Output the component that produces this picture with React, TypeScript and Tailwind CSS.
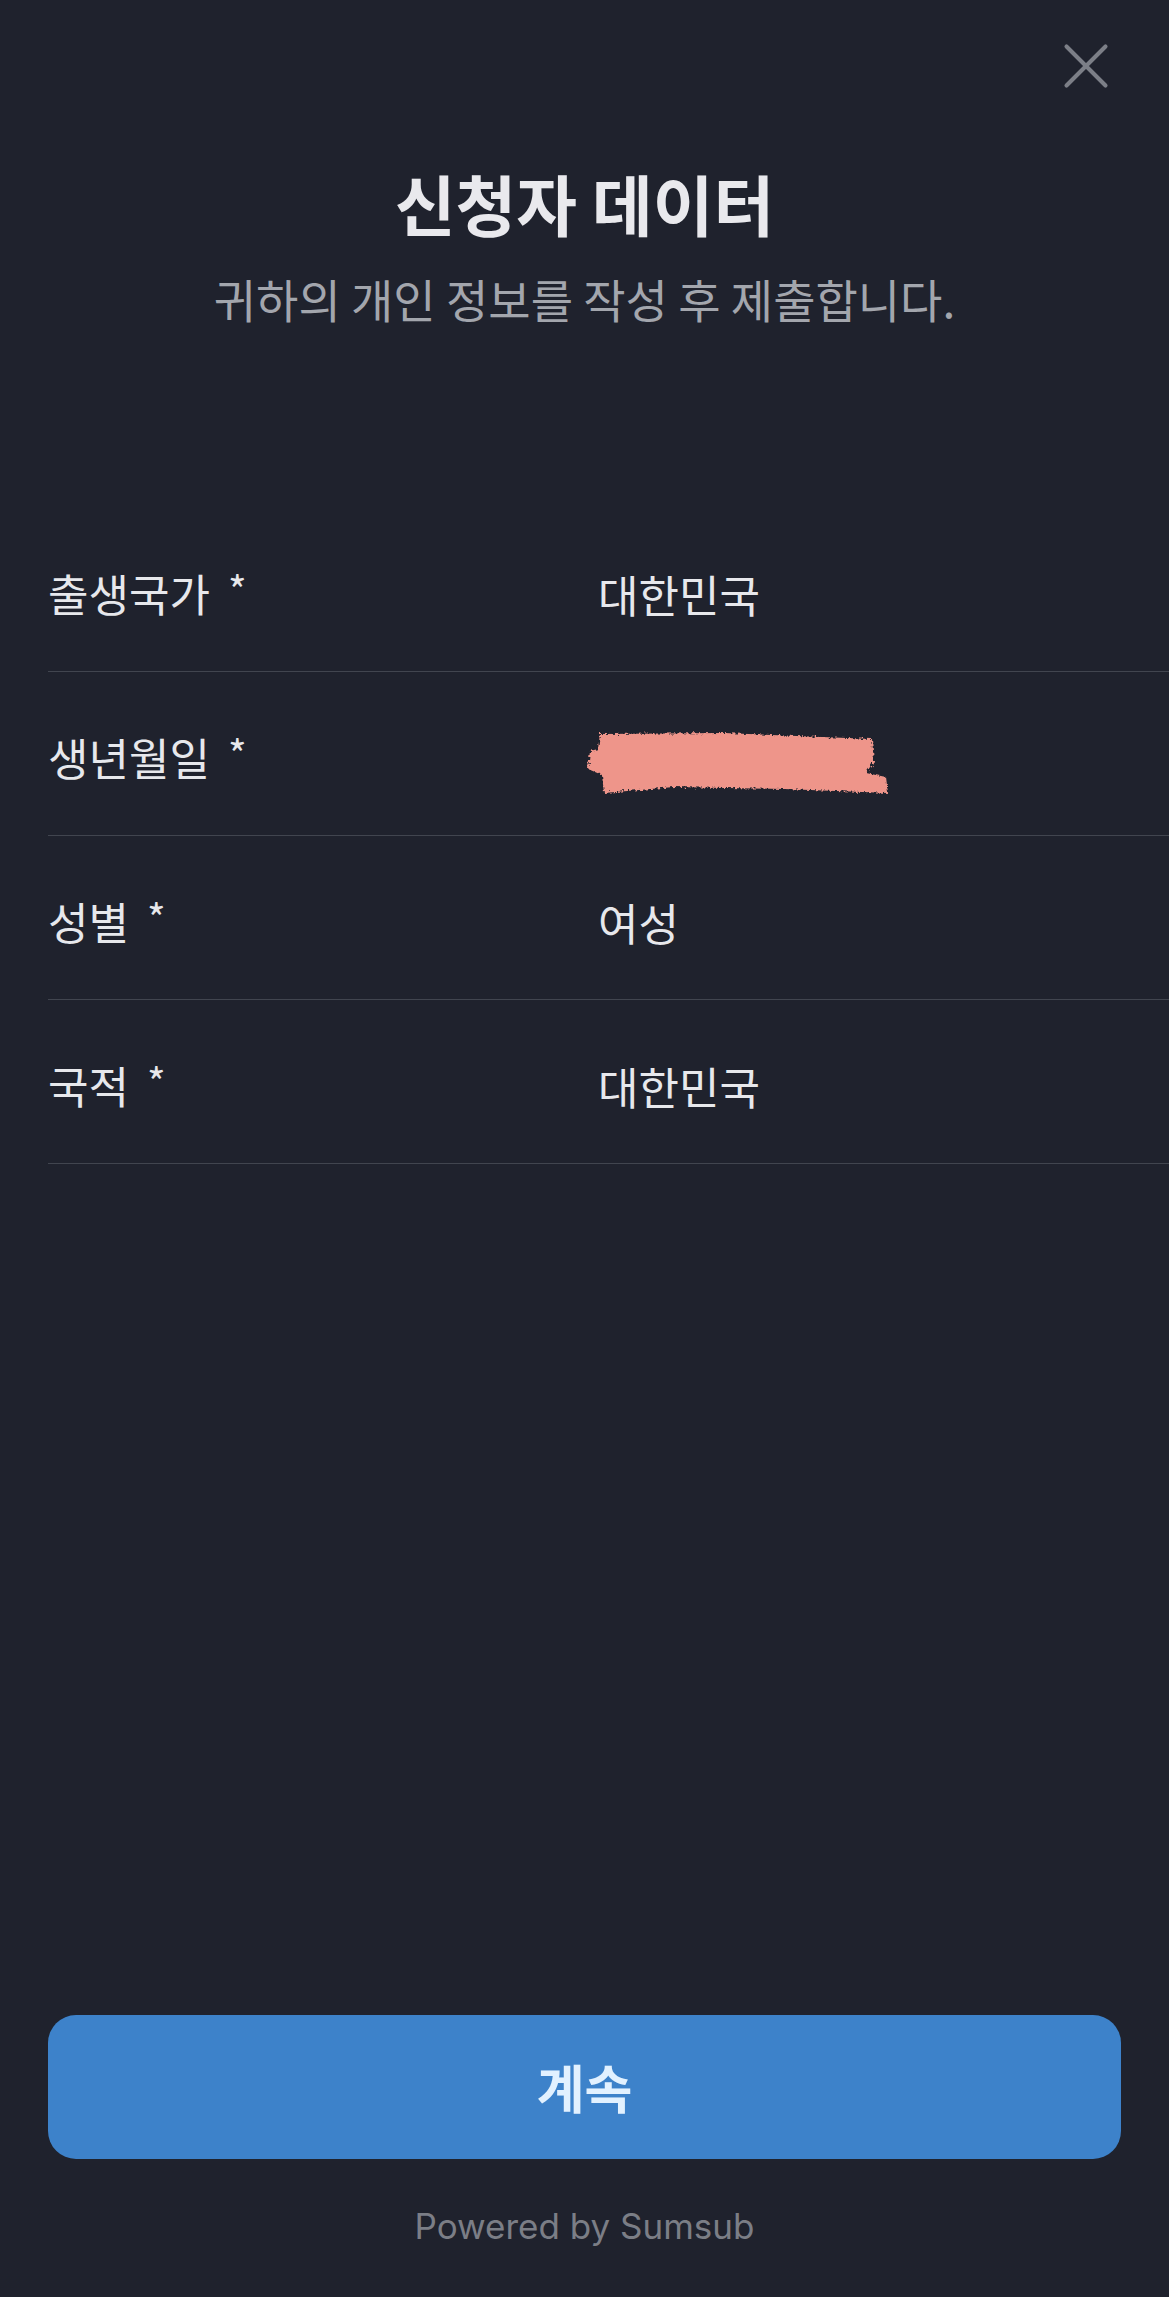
import { X } from "lucide-react";

const rows = [
  { label: "출생국가", value: "대한민국" },
  { label: "생년월일", value: null },
  { label: "성별", value: "여성" },
  { label: "국적", value: "대한민국" },
];

// hand-drawn highlighter stroke covering the birth date
const Scribble = () => (
  <svg width="310" height="70" viewBox="0 0 310 70" className="block">
    <defs>
      <filter id="rough" x="-5%" y="-20%" width="110%" height="140%">
        <feTurbulence type="fractalNoise" baseFrequency="0.35" numOctaves="3" seed="4" />
        <feDisplacementMap in="SourceGraphic" scale="6" />
      </filter>
    </defs>
    <path
      filter="url(#rough)"
      fill="#ee958a"
      d="M16 5 L140 4 L288 10 L290 32 L282 44 L302 48 L304 64 L200 60 L90 58 L20 64 L18 46 L4 40 L6 22 L14 20 Z"
    />
  </svg>
);

export default function App() {
  return (
    <div
      className="min-h-[2297px] w-full flex flex-col bg-[#1f222d] text-[#e7e8ec]"
      style={{ fontFamily: '"Noto Sans CJK KR", "Noto Sans", sans-serif' }}
    >
      <div className="h-[132px] flex items-center justify-end pr-[44px]">
        <X className="w-[78px] h-[78px] text-[#7c7f87]" strokeWidth={1.25} />
      </div>

      <h1 className="mt-[34px] text-center text-[66px] leading-[72px] font-bold text-[#e9e9ed]">신청자 데이터</h1>
      <p className="mt-[32px] text-center text-[46px] leading-[56px] text-[#a3a6ad]">
        귀하의 개인 정보를 작성 후 제출합니다.
      </p>

      <div className="mt-[182px] ml-[48px]">
        {rows.map((r) => (
          <div
            key={r.label}
            className="h-[164px] grid grid-cols-[550px_1fr] items-center pt-[8px] border-b border-[#41454f]"
          >
            <div className="text-[44px] leading-[56px]">
              {r.label}
              <span className="ml-[18px] text-[40px] relative -top-[6px]">*</span>
            </div>
            <div className="text-[44px] leading-[56px]">
              {r.value ?? (
                <div className="-ml-[14px] mt-[12px]">
                  <Scribble />
                </div>
              )}
            </div>
          </div>
        ))}
      </div>

      <div className="flex-1" />

      <div className="px-[48px]">
        <button className="w-full h-[144px] rounded-[28px] bg-[#3d82ca] text-[#e2f1ff] text-[52px] font-semibold">
          계속
        </button>
      </div>
      <p
        className="mt-[47px] mb-[51px] text-center text-[35px] leading-[40px] text-[#7b7e86]"
        style={{ fontFamily: "Inter, 'Noto Sans', sans-serif" }}
      >
        Powered by Sumsub
      </p>
    </div>
  );
}
